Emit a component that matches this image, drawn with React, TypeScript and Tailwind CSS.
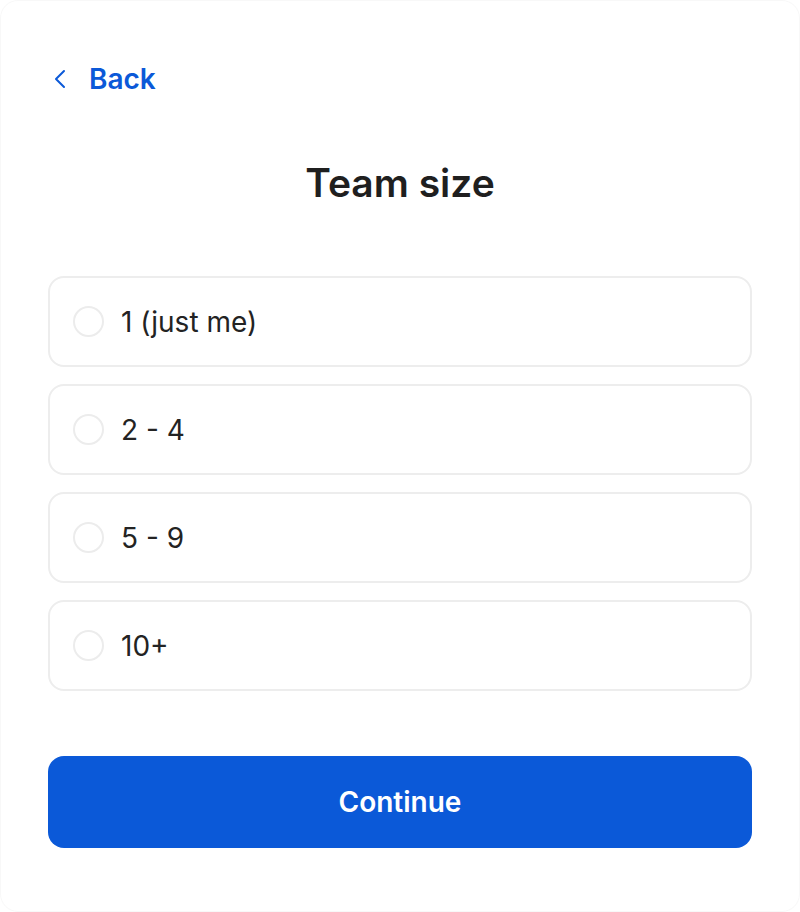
import React, { useState } from "react";

const options = ["1 (just me)", "2 - 4", "5 - 9", "10+"];

export default function App() {
  const [sel, setSel] = useState<number | null>(null);
  return (
    <div className="w-[800px] h-[912px] bg-white" style={{ fontFamily: "Inter, 'Noto Sans', sans-serif" }}>
      <div className="w-full h-full rounded-[18px] border border-[#f8f8f8] bg-white px-[47px] pt-[60px]">
        <button className="flex items-center h-9 text-[#0b59d8] text-[28px] font-semibold leading-none">
          <svg width="14" height="20" viewBox="0 0 14 20" fill="none" className="ml-[5px] mr-[22px]">
            <path d="M11 2 L3 10 L11 18" stroke="#0b59d8" strokeWidth="2" strokeLinecap="round" strokeLinejoin="round" />
          </svg>
          Back
        </button>
        <h1 className="mt-[64px] text-center text-[39px] font-semibold text-[#1f1f1f] leading-[44px]">Team size</h1>
        <div className="mt-[71px] flex flex-col gap-[17px]">
          {options.map((o, i) => (
            <button
              key={o}
              onClick={() => setSel(i)}
              className="h-[91px] w-full rounded-[16px] border-2 border-[#ededed] bg-white flex items-center pl-[23px] pr-6 text-left"
            >
              <span className={`w-[31px] h-[31px] rounded-full border-2 ${sel === i ? "border-[#0b59d8]" : "border-[#ececec]"} shrink-0`} />
              <span className="ml-[17px] text-[28px] text-[#232323] leading-none">{o}</span>
            </button>
          ))}
        </div>
        <button className="mt-[65px] w-full h-[92px] rounded-[16px] bg-[#0b59d8] text-white text-[28px] font-semibold">
          Continue
        </button>
      </div>
    </div>
  );
}
